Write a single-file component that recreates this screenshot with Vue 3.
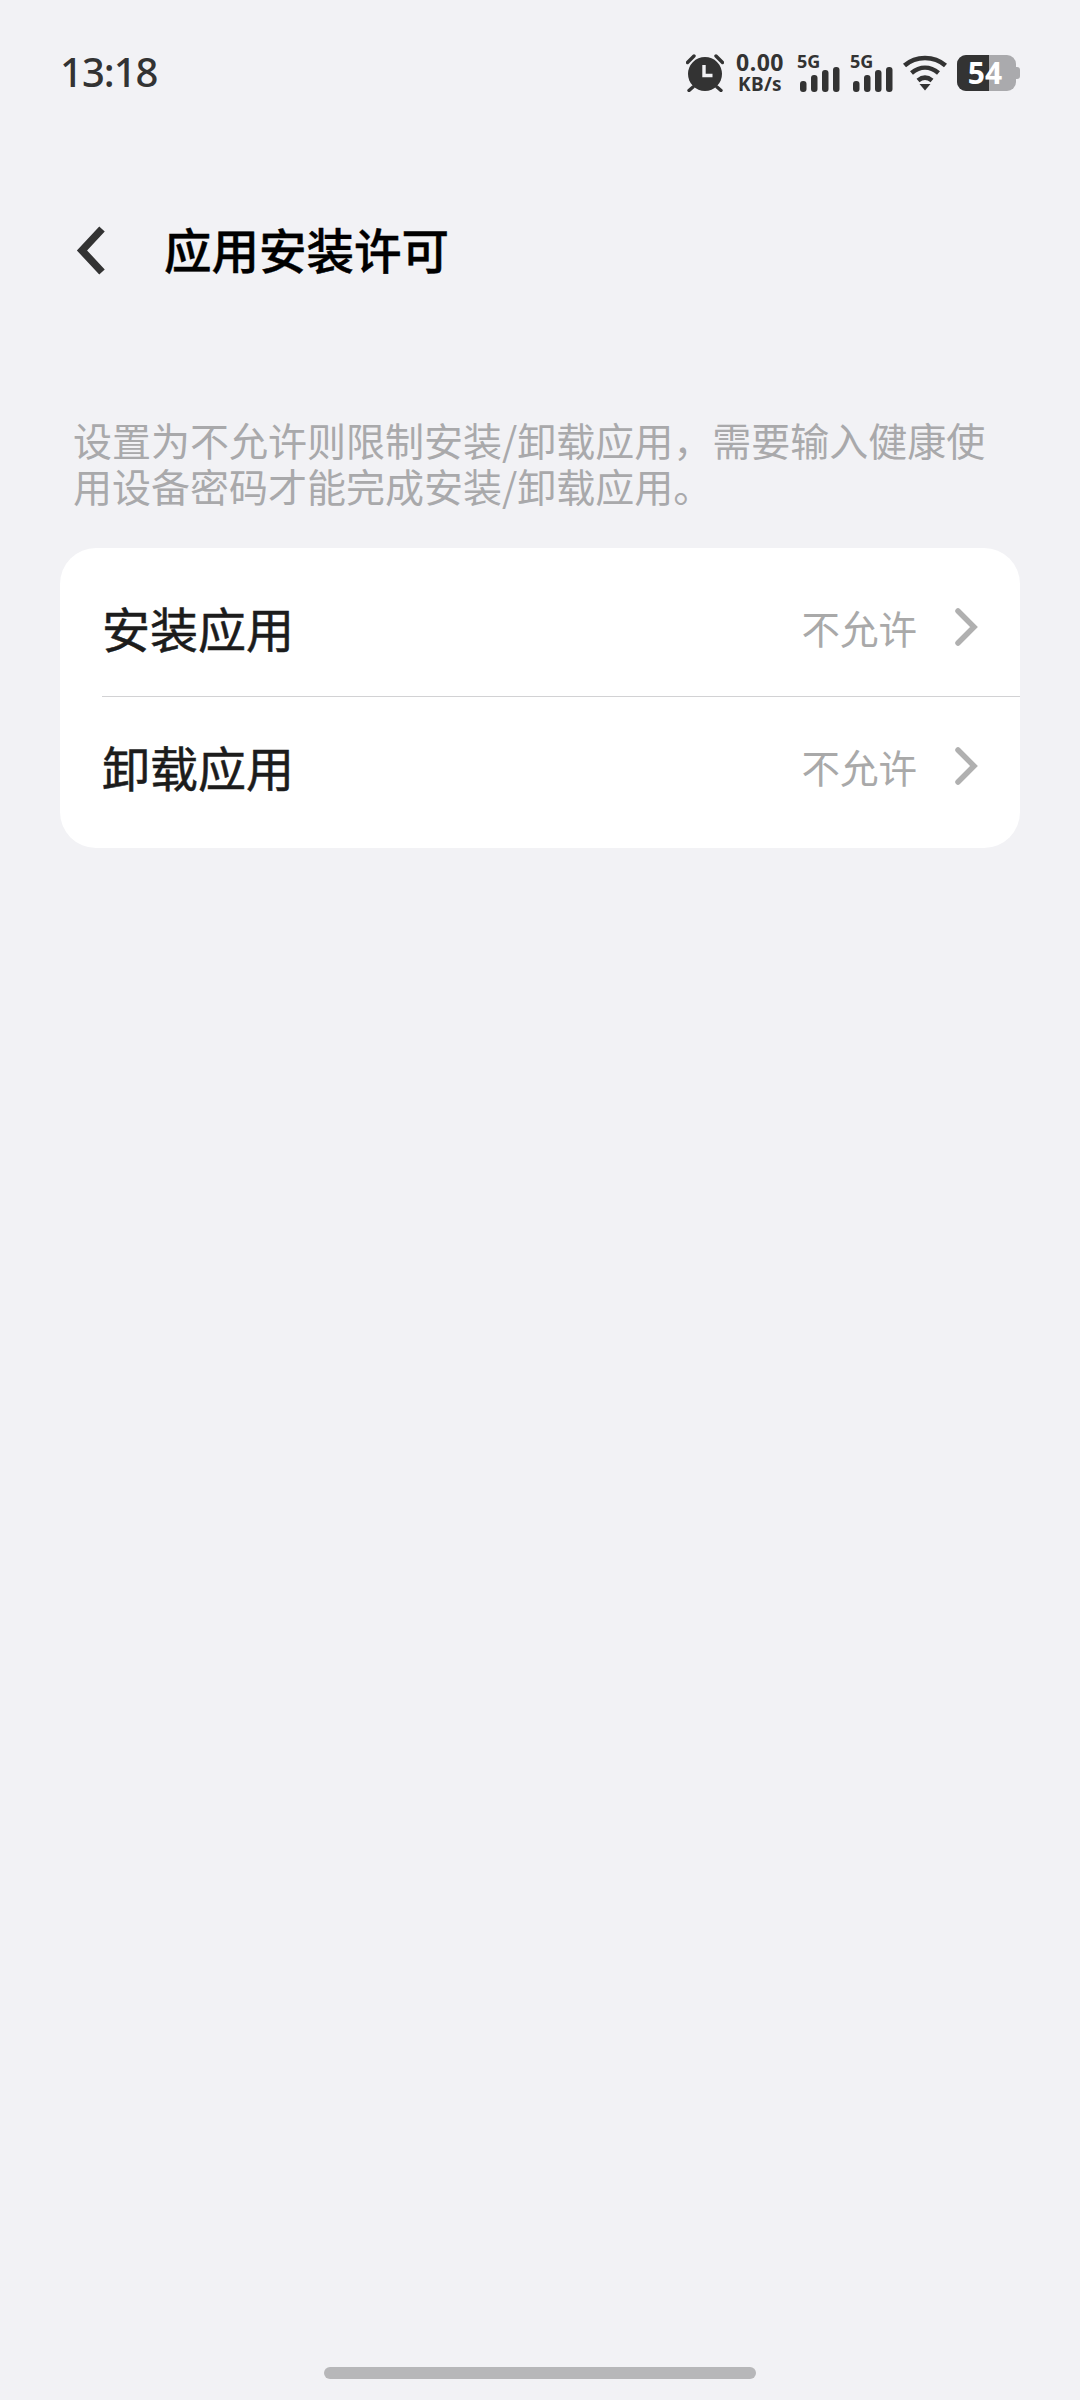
<script setup>
const rows = [
  { name: '安装应用', value: '不允许' },
  { name: '卸载应用', value: '不允许' },
]
const bars = [
  { x: 2, h: 11 }, { x: 13, h: 17 }, { x: 24, h: 22 }, { x: 35, h: 25 },
]
</script>

<template>
  <div class="page">
    <div class="status">
      <span class="time">13:18</span>
      <div class="status-icons">
        <svg class="alarm" width="38" height="38" viewBox="0 0 38 38">
          <circle cx="19" cy="20" r="17" fill="#333" />
          <path d="M18 11v10.500h8.500" fill="none" stroke="#f2f2f5" stroke-width="3.400" />
          <path d="M1.500 8.500 8 2M36.500 8.500 30 2M7 33l-4 3.500M31 33l4 3.500" fill="none" stroke="#333" stroke-width="3.400" stroke-linecap="round" />
        </svg>
        <div class="speed">
          <span class="speed-num">0.00</span>
          <span class="speed-unit">KB/s</span>
        </div>
        <div v-for="n in 2" :key="n" class="signal">
          <span class="five-g">5G</span>
          <svg class="bars" width="42" height="26" viewBox="0 0 42 26">
            <rect v-for="b in bars" :key="b.x" :x="b.x" :y="26 - b.h" width="6.500" :height="b.h" rx="3" fill="#333" />
          </svg>
        </div>
        <svg class="wifi" width="46" height="38" viewBox="0 0 46 38">
          <path d="M2.500 11.500C14 1.500 32 1.500 43.500 11.500M9.500 19C18 12 28 12 36.500 19M16 26.500C20.500 22.800 25.500 22.800 30 26.500" fill="none" stroke="#333" stroke-width="4.600" />
          <path d="M17.500 30h11L23 36.500z" fill="#333" />
        </svg>
        <div class="battery">
          <span class="batt-fill"></span>
          <span class="batt-text">54</span>
          <span class="batt-nub"></span>
        </div>
      </div>
    </div>

    <header class="header">
      <svg class="back" width="32" height="52" viewBox="0 0 32 52">
        <path d="M26 4 6 25.500 26 47" fill="none" stroke="#333" stroke-width="7.500" />
      </svg>
      <h1 class="title">应用安装许可</h1>
    </header>

    <p class="desc">设置为不允许则限制安装/卸载应用，需要输入健康使用设备密码才能完成安装/卸载应用。</p>

    <section class="card">
      <div v-for="row in rows" :key="row.name" class="row">
        <span class="row-name">{{ row.name }}</span>
        <span class="row-value">{{ row.value }}</span>
        <svg class="chev" width="24" height="38" viewBox="0 0 24 38">
          <path d="M4 3 20 19 4 35" fill="none" stroke="#b0b0b0" stroke-width="5.500" stroke-linecap="round" />
        </svg>
      </div>
    </section>

    <div class="home-bar"></div>
  </div>
</template>

<style>
html, body { margin: 0; background: #f2f2f5; }
</style>

<style scoped>
.page {
  width: 1080px;
  height: 2400px;
  background: #f2f2f5;
  display: flex;
  flex-direction: column;
  font-family: "Noto Sans CJK SC", "Noto Sans", sans-serif;
  overflow: hidden;
}
.status {
  height: 38px;
  margin-top: 54px;
  padding: 0 60px 0 60px;
  display: flex;
  align-items: center;
  justify-content: space-between;
}
.time {
  font-family: "Noto Sans", sans-serif;
  font-size: 40px;
  font-weight: 500;
  letter-spacing: -1px;
  line-height: 38px;
  color: #333;
  margin-top: -2px;
}
.status-icons {
  display: flex;
  align-items: center;
}
.speed {
  width: 48px;
  margin-left: 12px;
  margin-right: 1px;
  display: flex;
  flex-direction: column;
  align-items: center;
  color: #333;
  font-family: "Noto Sans", sans-serif;
  font-weight: 700;
}
.speed-num { font-size: 23px; line-height: 21px; letter-spacing: 0.5px; }
.speed-unit { font-size: 19px; line-height: 19px; margin-top: 2px; letter-spacing: 0.3px; }
.signal {
  width: 42px;
  height: 38px;
  margin-left: 13px;
  position: relative;
}
.signal + .signal { margin-left: 11px; }
.five-g {
  position: absolute;
  left: -1px;
  top: -1px;
  font-family: "Noto Sans", sans-serif;
  font-size: 18px;
  font-weight: 700;
  line-height: 17px;
  color: #333;
}
.bars { position: absolute; left: 0; top: 12px; }
.wifi { margin-left: 9px; }
.battery {
  position: relative;
  width: 59px;
  height: 36px;
  margin-left: 9px;
  margin-right: 4px;
  border-radius: 9px;
  background: #aaaaad;
  display: flex;
  align-items: center;
  justify-content: center;
}
.batt-fill {
  position: absolute;
  left: 0;
  top: 0;
  bottom: 0;
  width: 32px;
  border-radius: 9px 0 0 9px;
  background: #333;
}
.batt-text {
  position: relative;
  color: #fff;
  font-family: "Noto Sans", sans-serif;
  font-size: 30px;
  font-weight: 700;
  line-height: 36px;
  margin-left: -3px;
}
.batt-nub {
  position: absolute;
  right: -4px;
  top: 12px;
  width: 4px;
  height: 12px;
  border-radius: 0 3px 3px 0;
  background: #aaaaad;
}
.header {
  height: 52px;
  margin-top: 131px;
  padding-left: 76px;
  display: flex;
  align-items: center;
}
.back { flex: none; margin-top: 3px; }
.title {
  margin: 0 0 0 56px;
  font-size: 47.500px;
  font-weight: 500;
  -webkit-text-stroke: 0.4px #000;
  line-height: 52px;
  color: #000;
}
.desc {
  width: 925px;
  margin: 141px 0 0 73px;
  font-size: 39px;
  line-height: 46px;
  color: #a9a9ab;
}
.card {
  margin: 40px 60px 0;
  height: 300px;
  box-sizing: border-box;
  padding: 10px 0 0 42px;
  border-radius: 36px;
  background: #fff;
  overflow: hidden;
}
.row {
  height: 138px;
  display: flex;
  align-items: center;
  padding-right: 42px;
}
.row + .row {
  border-top: 1px solid #d2d2d4;
}
.row-name {
  flex: 1;
  font-size: 48px;
  font-weight: 400;
  -webkit-text-stroke: 0.5px #1c1c1c;
  line-height: 60px;
  color: #1c1c1c;
}
.row-value {
  font-size: 38.500px;
  line-height: 50px;
  color: #a9a9a9;
}
.chev { margin-left: 37px; flex: none; }
.home-bar {
  width: 432px;
  height: 12px;
  border-radius: 6px;
  background: #b7b7b9;
  margin: auto auto 21px;
}
</style>
